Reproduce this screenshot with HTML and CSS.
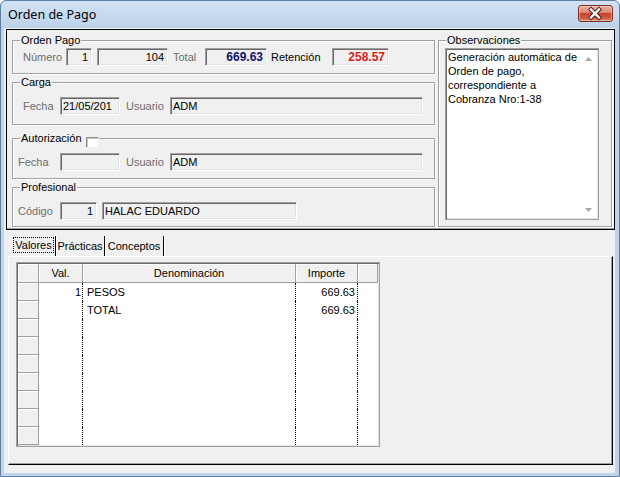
FILE: index.html
```html
<!DOCTYPE html>
<html lang="es">
<head>
<meta charset="utf-8">
<title>Orden de Pago</title>
<link rel="stylesheet" href="styles.css">
</head>
<body>
<div class="window">
  <div class="titlebar">
    <span class="title">Orden de Pago</span>
    <div class="close">
      <svg width="34" height="17" viewBox="0 0 34 17">
        <path d="M13 4.5 L21 12.5 M21 4.5 L13 12.5" stroke="#4a1a12" stroke-width="4.2" stroke-linecap="square" fill="none"/>
        <path d="M13 4.5 L21 12.5 M21 4.5 L13 12.5" stroke="#ffffff" stroke-width="2.4" stroke-linecap="square" fill="none"/>
      </svg>
    </div>
  </div>
  <div class="client">
    <div class="panel">
      <div class="leftcol">
        <div class="group g-orden">
          <div class="legend">Orden Pago</div>
          <div class="row r-orden">
            <span class="lbl gray w43">Número</span>
            <span class="box w26 right">1</span>
            <span class="box w71 right ml5">104</span>
            <span class="lbl gray w32 ml5">Total</span>
            <span class="box w62 right bold navy">669.63</span>
            <span class="lbl w61 ml4">Retención</span>
            <span class="box w57 right bold red">258.57</span>
          </div>
        </div>
        <div class="group g-carga">
          <div class="legend">Carga</div>
          <div class="row r-carga">
            <span class="lbl gray w37">Fecha</span>
            <span class="box w60">21/05/201</span>
            <span class="lbl gray w44 ml6">Usuario</span>
            <span class="box w253">ADM</span>
          </div>
        </div>
        <div class="group g-aut">
          <div class="legend">Autorización<span class="check"></span></div>
          <div class="row r-aut">
            <span class="lbl gray w42">Fecha</span>
            <span class="box w60"></span>
            <span class="lbl gray w44 ml6">Usuario</span>
            <span class="box w253">ADM</span>
          </div>
        </div>
        <div class="group g-prof">
          <div class="legend">Profesional</div>
          <div class="row r-prof">
            <span class="lbl gray w42">Código</span>
            <span class="box w37 right">1</span>
            <span class="box w195 ml5">HALAC EDUARDO</span>
          </div>
        </div>
      </div>
      <div class="group g-obs">
        <div class="legend">Observaciones</div>
        <div class="memo">
          <div class="memo-text">Generación automática de<br>Orden de pago,<br>correspondiente a<br>Cobranza Nro:1-38</div>
          <div class="sb">
            <div class="sb-btn"><svg width="7" height="4" viewBox="0 0 7 4"><path d="M0 4 L3.5 0 L7 4 Z" fill="#a9a9a9"/></svg></div>
            <div class="sb-btn"><svg width="7" height="4" viewBox="0 0 7 4"><path d="M0 0 L3.5 4 L7 0 Z" fill="#a9a9a9"/></svg></div>
          </div>
        </div>
      </div>
    </div>

    <div class="tabs">
      <div class="tab t1"><span class="focus">Valores</span></div>
      <div class="tab t2">Prácticas</div>
      <div class="tab t3">Conceptos</div>
    </div>

    <div class="page">
      <div class="grid">
        <div class="hc"></div>
        <div class="hc">Val.</div>
        <div class="hc">Denominación</div>
        <div class="hc">Importe</div>
        <div class="hc"></div>

        <div class="fc"></div><div class="dc r pr1">1</div><div class="dc">PESOS</div><div class="dc r">669.63</div><div class="de"></div>
        <div class="fc"></div><div class="dc r pr1"></div><div class="dc">TOTAL</div><div class="dc r">669.63</div><div class="de"></div>
        <div class="fc"></div><div class="dc"></div><div class="dc"></div><div class="dc"></div><div class="de"></div>
        <div class="fc"></div><div class="dc"></div><div class="dc"></div><div class="dc"></div><div class="de"></div>
        <div class="fc"></div><div class="dc"></div><div class="dc"></div><div class="dc"></div><div class="de"></div>
        <div class="fc"></div><div class="dc"></div><div class="dc"></div><div class="dc"></div><div class="de"></div>
        <div class="fc"></div><div class="dc"></div><div class="dc"></div><div class="dc"></div><div class="de"></div>
        <div class="fc"></div><div class="dc"></div><div class="dc"></div><div class="dc"></div><div class="de"></div>
        <div class="fc"></div><div class="dc"></div><div class="dc"></div><div class="dc"></div><div class="de"></div>
      </div>
    </div>
  </div>
</div>
</body>
</html>
```

FILE: styles.css
```css
* { box-sizing: border-box; }
html, body { margin: 0; padding: 0; }
body {
  width: 620px;
  height: 477px;
  overflow: hidden;
  font-family: "Liberation Sans", Arial, sans-serif;
  font-size: 11px;
  color: #000;
  background: #fff;
}

.window {
  width: 620px;
  height: 477px;
  border: 1px solid #5f7ea0;
  border-radius: 6px 6px 0 0;
  background: linear-gradient(#d2e2f3 0, #bcd2ea 27px, #c0d5ec 28px, #c0d5ec 100%);
  display: flex;
  flex-direction: column;
  padding: 0 4px 3px 3px;
}

.titlebar {
  height: 27px;
  display: flex;
  justify-content: space-between;
  align-items: flex-start;
}
.title {
  font-family: "Noto Sans", "Open Sans", sans-serif;
  font-size: 12.5px;
  line-height: 16px;
  margin: 6px 0 0 4px;
  color: #000;
}
.close {
  width: 35px;
  height: 17px;
  margin: 4px 2px 0 0;
  border: 1px solid #7a2f22;
  border-radius: 3px;
  background: linear-gradient(#eab0a3 0%, #dc8672 45%, #c8452d 50%, #cf5a3f 80%, #e0937c 100%);
  box-shadow: inset 0 0 0 1px rgba(255,255,255,0.35);
  display: flex;
}
.close svg { display: block; margin: -1px 0 0 -1px; }

.client {
  flex: 1;
  background: #f0f0f0;
  display: flex;
  flex-direction: column;
}

.panel {
  margin: 1px 0 0 2px;
  width: 609px;
  height: 201px;
  border: 1px solid #000;
  box-shadow: inset 0 -1px 0 #a0a0a0;
  display: flex;
  gap: 3px;
  padding: 10px 0 0 5px;
}
.leftcol {
  width: 423px;
  display: flex;
  flex-direction: column;
}

.group {
  border: 1px solid #a0a0a0;
  box-shadow: inset 1px 1px 0 #fff, 1px 1px 0 #fff;
}
.legend {
  display: flex;
  align-items: flex-start;
  width: fit-content;
  height: 13px;
  line-height: 13px;
  margin: -7px 0 0 7px;
  padding: 0 1px;
  background: #f0f0f0;
  white-space: nowrap;
}
.check {
  width: 12px;
  height: 10px;
  margin: 5px 0 0 4px;
  background: #fff;
  border-top: 1px solid #8a8a8a;
  border-left: 1px solid #8a8a8a;
  box-shadow: inset 1px 1px 0 #c8c8c8;
}

.g-orden { height: 34px; }
.g-carga { height: 43px; margin-top: 8px; }
.g-aut { height: 41px; margin-top: 13px; }
.g-prof { height: 40px; margin-top: 8px; }

.row {
  display: flex;
  align-items: center;
  height: 18px;
  margin-top: 8px;
}
.r-orden { margin-top: 1px; padding-left: 10px; }
.r-carga { padding-left: 10px; }
.r-aut { padding-left: 5px; }
.r-prof { padding-left: 5px; }

.lbl { white-space: nowrap; line-height: 14px; }
.gray { color: #6d6d6d; }

.box {
  height: 18px;
  line-height: 14px;
  padding: 0 3px 0 2px;
  background: #f0f0f0;
  border-top: 1px solid #a0a0a0;
  border-left: 1px solid #a0a0a0;
  border-right: 1px solid #fff;
  border-bottom: 1px solid #fff;
  box-shadow: inset 1px 1px 0 #696969, inset -1px -1px 0 #e3e3e3;
  white-space: nowrap;
  overflow: hidden;
  display: flex;
  align-items: center;
}
.box.right { justify-content: flex-end; }
.bold { font-weight: bold; font-size: 12px; }
.navy { color: #12126e; }
.red { color: #dd1c1c; }

.w26 { width: 26px; }
.w32 { width: 32px; }
.w37 { width: 37px; }
.w42 { width: 42px; }
.w43 { width: 43px; }
.w44 { width: 44px; }
.w57 { width: 57px; }
.w60 { width: 60px; }
.w61 { width: 61px; }
.w62 { width: 62px; }
.w71 { width: 71px; }
.w195 { width: 195px; }
.w253 { width: 253px; }
.ml4 { margin-left: 4px; }
.ml5 { margin-left: 5px; }
.ml6 { margin-left: 6px; }

.g-obs {
  width: 174px;
  height: 187px;
}
.memo {
  margin: 1px 0 0 6px;
  width: 154px;
  height: 172px;
  background: #fff;
  border-top: 1px solid #a0a0a0;
  border-left: 1px solid #a0a0a0;
  border-right: 1px solid #fff;
  border-bottom: 1px solid #fff;
  box-shadow: inset 1px 1px 0 #696969, inset -1px -1px 0 #e3e3e3;
  outline: 1px solid #a0a0a0;
  outline-offset: -1px;
  padding: 1px;
  display: flex;
}
.memo-text {
  flex: 1;
  line-height: 14px;
  padding-left: 1px;
  white-space: nowrap;
}
.sb {
  width: 17px;
  display: flex;
  flex-direction: column;
  justify-content: space-between;
}
.sb-btn {
  height: 17px;
  display: flex;
  align-items: center;
  justify-content: center;
}
.sb-btn svg { display: block; }

.tabs {
  display: flex;
  height: 20px;
  margin: 6px 0 0 8px;
}
.tab {
  height: 20px;
  display: flex;
  align-items: center;
  justify-content: center;
  border-right: 1px solid #000;
  box-shadow: 1px 0 0 #fff;
  white-space: nowrap;
}
.t1 { width: 44px; align-items: flex-start; }
.t2 { width: 49px; }
.t3 { width: 59px; }
.focus {
  width: 41px;
  height: 16px;
  margin-top: 1px;
  border: 1px dotted #000;
  line-height: 14px;
  text-align: center;
}

.page {
  margin-left: 4px;
  width: 605px;
  height: 209px;
  border: 1px solid;
  border-color: #fff #000 #000 #fff;
  box-shadow: inset -1px -1px 0 #a0a0a0;
  padding: 5px 0 0 7px;
}

.grid {
  width: 364px;
  height: 185px;
  border: 1px solid #a0a0a0;
  box-shadow: inset 1px 1px 0 #696969, inset -1px -1px 0 #e3e3e3;
  padding: 1px;
  background: #fff;
  display: grid;
  grid-template-columns: 21px 44px 213px 62px 20px;
  grid-template-rows: 19px repeat(9, 18px);
}
.hc, .fc {
  background: #f0f0f0;
  border-right: 1px solid #a0a0a0;
  border-bottom: 1px solid #a0a0a0;
  box-shadow: inset 1px 1px 0 #fff;
  display: flex;
  align-items: center;
  justify-content: center;
  white-space: nowrap;
}
.dc {
  border-right: 1px dotted #000;
  display: flex;
  align-items: center;
  padding: 0 2px 0 4px;
  white-space: nowrap;
}
.dc.r { justify-content: flex-end; }
.dc.pr1 { padding-right: 1px; }
.de { background: #fff; }
```
